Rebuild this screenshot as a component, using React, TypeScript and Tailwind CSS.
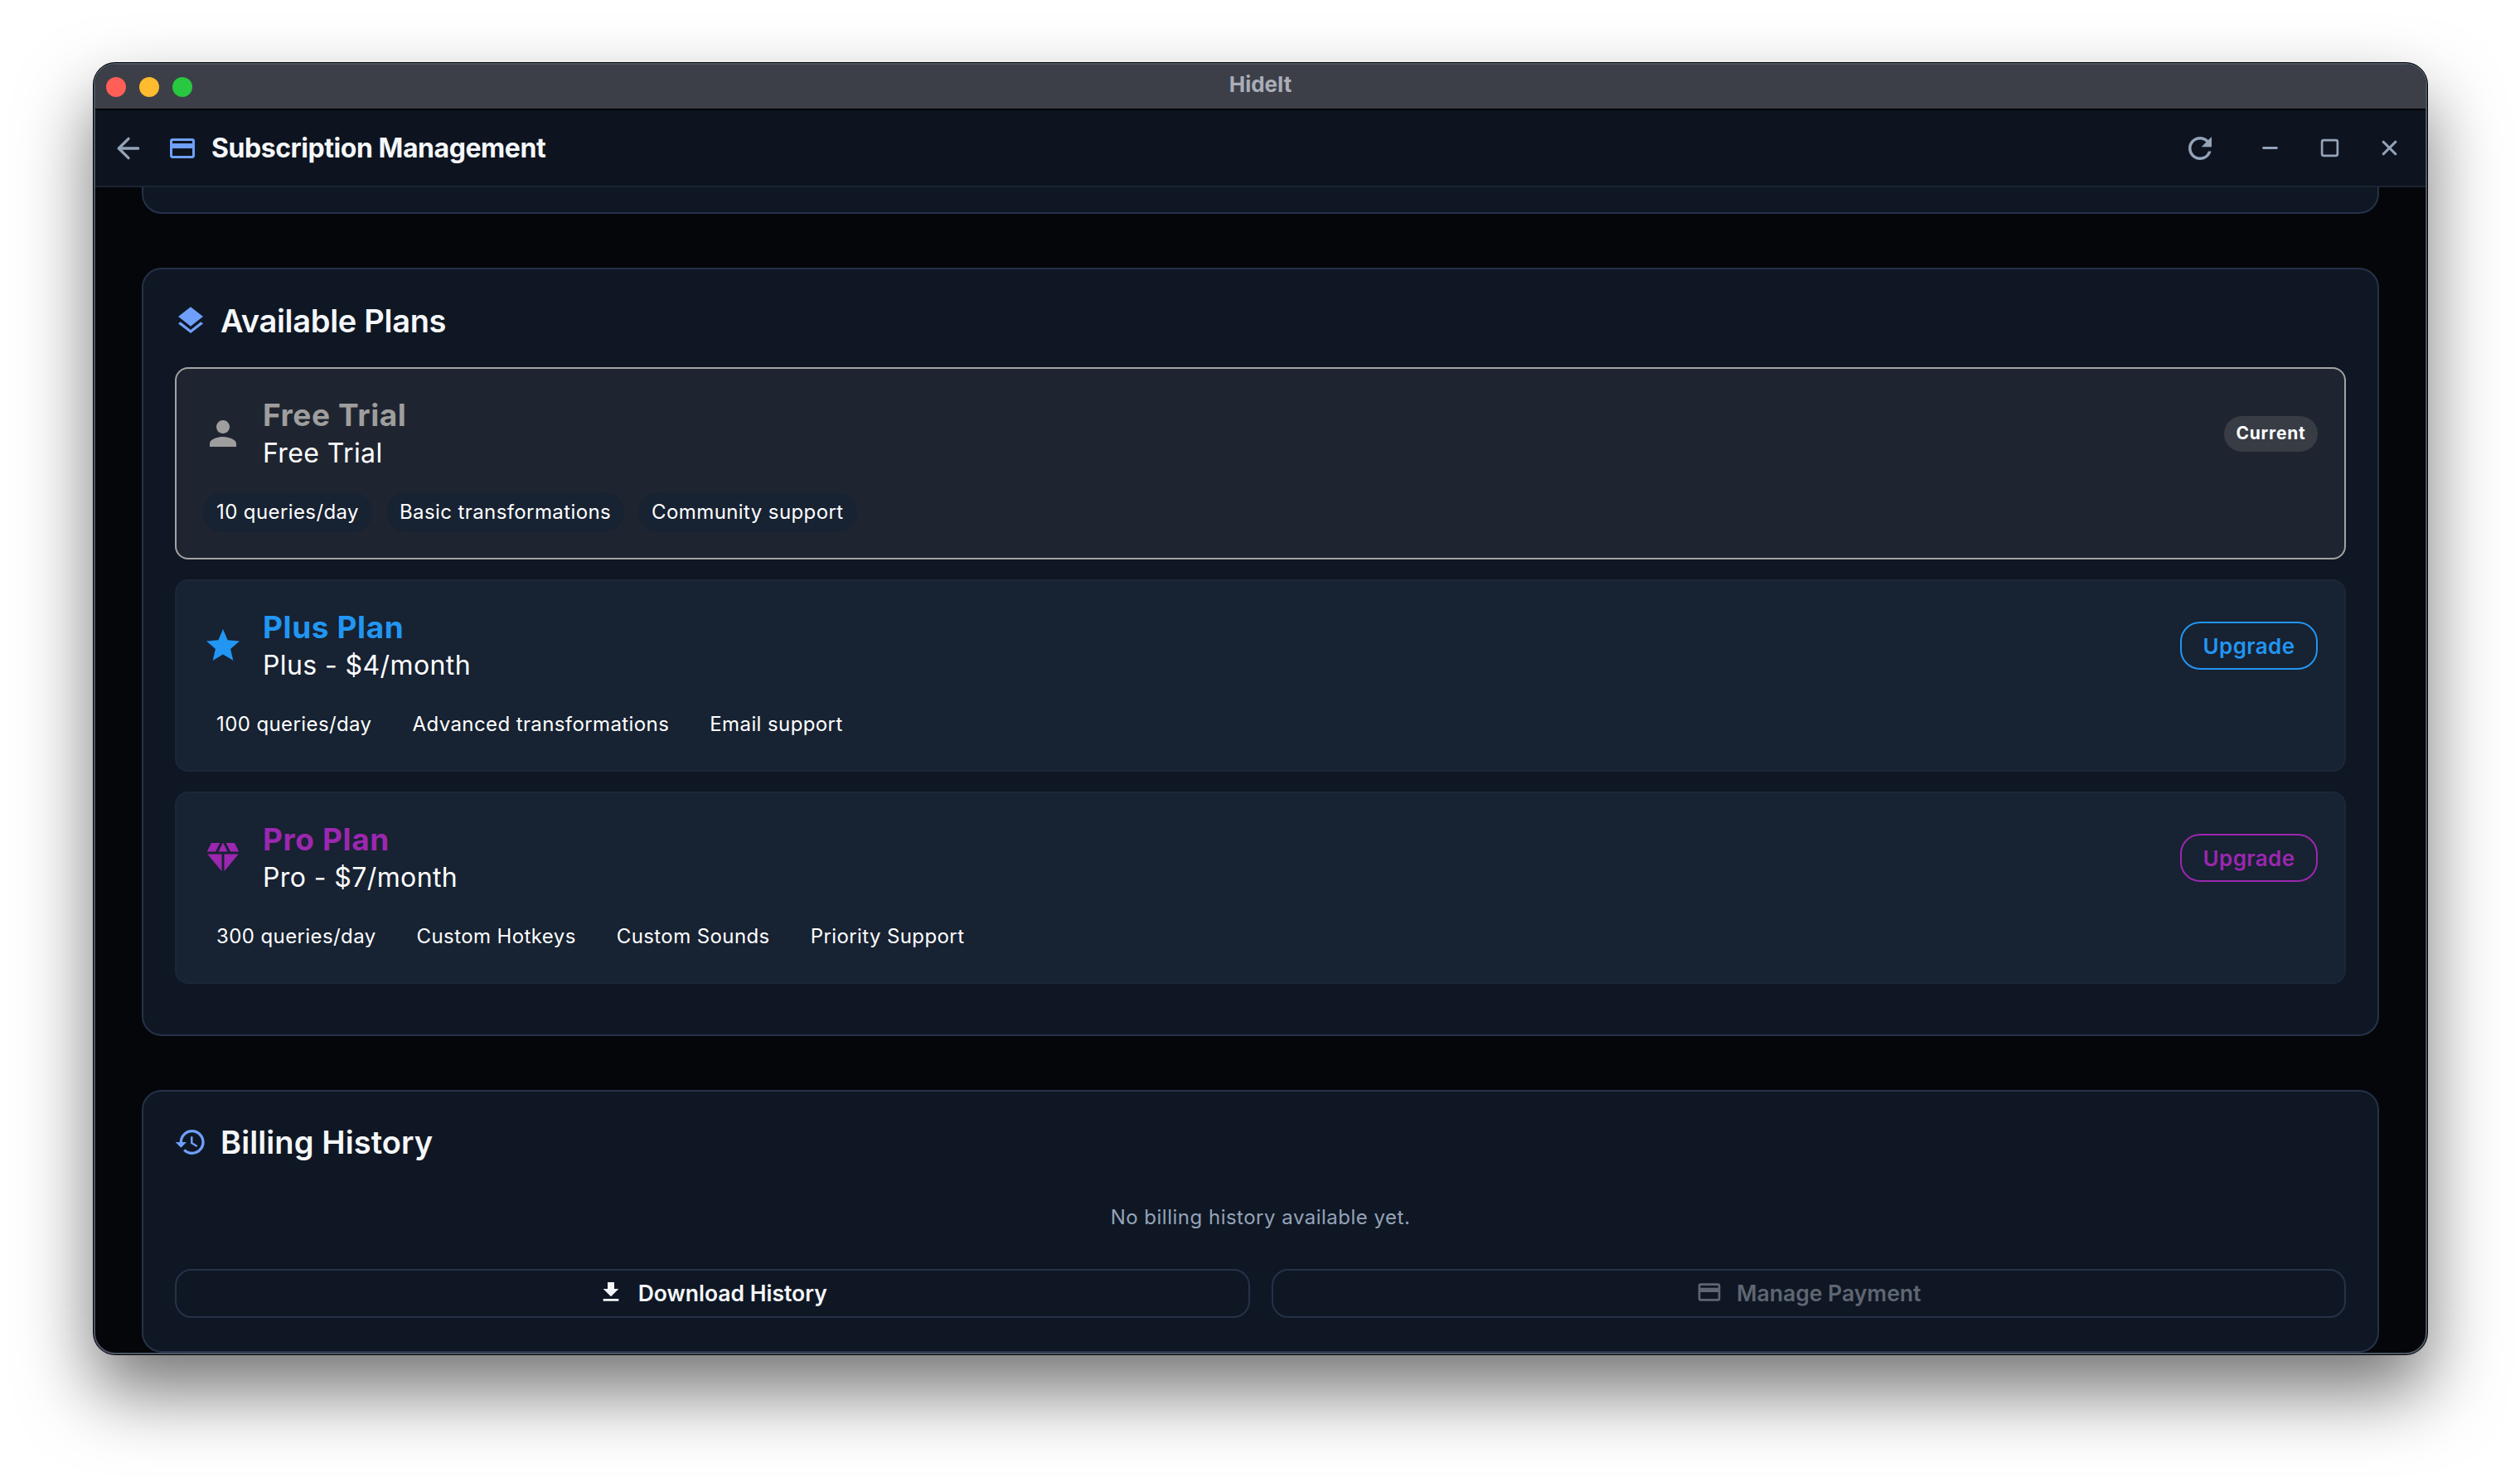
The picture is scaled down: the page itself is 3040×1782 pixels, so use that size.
import { ArrowLeft, Minus, Square, X } from "lucide-react";
import {
  MdCreditCard,
  MdDiamond,
  MdFileDownload,
  MdHistory,
  MdLayers,
  MdPerson,
  MdRefresh,
  MdStar,
} from "react-icons/md";
import type { ReactNode } from "react";

type Plan = {
  name: string;
  price: string;
  icon: ReactNode;
  titleClass: string;
  features: string[];
  current?: boolean;
  buttonClass?: string;
};

const plans: Plan[] = [
  {
    name: "Free Trial",
    price: "Free Trial",
    icon: <MdPerson size={48} className="text-[#9e9e9e]" />,
    titleClass: "text-[#9e9e9e]",
    features: ["10 queries/day", "Basic transformations", "Community support"],
    current: true,
  },
  {
    name: "Plus Plan",
    price: "Plus - $4/month",
    icon: <MdStar size={48} className="text-[#2196f3]" />,
    titleClass: "text-[#2196f3]",
    features: ["100 queries/day", "Advanced transformations", "Email support"],
    buttonClass: "border-[#2196f3] text-[#2196f3]",
  },
  {
    name: "Pro Plan",
    price: "Pro - $7/month",
    icon: <MdDiamond size={48} className="text-[#9c27b0]" />,
    titleClass: "text-[#9c27b0]",
    features: ["300 queries/day", "Custom Hotkeys", "Custom Sounds", "Priority Support"],
    buttonClass: "border-[#9c27b0] text-[#9c27b0]",
  },
];

function PlanCard({ plan }: { plan: Plan }) {
  return (
    <div
      className={
        plan.current
          ? "h-[232px] rounded-[16px] border-2 border-[#a3a3a3] bg-[#1f2530] pl-[32px] pr-[32px] pt-[34px]"
          : "h-[232px] rounded-[16px] border-2 border-[#1c2738] bg-[#172232] pl-[32px] pr-[32px] pt-[34px]"
      }
    >
      <div className="flex items-center justify-between">
        <div className="flex items-center gap-[24px]">
          <div className="-mt-[3px] flex h-[48px] w-[48px] items-center justify-center">{plan.icon}</div>
          <div>
            <div className={`text-[37px] leading-[44px] font-bold tracking-[0.6px] ${plan.titleClass}`}>{plan.name}</div>
            <div className="mt-[2px] text-[32px] leading-[44px] font-normal tracking-[0.4px] text-white">{plan.price}</div>
          </div>
        </div>
        {plan.current ? (
          <span className="-mt-[2px] flex h-[43px] w-[113px] items-center justify-center rounded-full bg-[#373c45] text-[21px] font-bold tracking-[0.8px] text-white">
            Current
          </span>
        ) : (
          <button
            className={`-mt-[2px] h-[58px] w-[166px] rounded-[24px] border-2 text-[26px] font-semibold tracking-[0.4px] ${plan.buttonClass}`}
          >
            Upgrade
          </button>
        )}
      </div>
      <div className="mt-[25px] flex gap-[17px]">
        {plan.features.map((feature) => (
          <span
            key={feature}
            className={
              plan.current
                ? "flex h-[48px] items-center rounded-full bg-[#172232] px-[16px] text-[24px] font-normal tracking-[0.4px] text-white"
                : "flex h-[48px] items-center rounded-full px-[16px] text-[24px] font-normal tracking-[0.4px] text-white"
            }
          >
            {feature}
          </span>
        ))}
      </div>
    </div>
  );
}

export default function App() {
  return (
    <div className="h-[1782px] w-[3040px] overflow-hidden bg-white pl-[113px] pt-[76px] [font-family:Inter,sans-serif]">
      <div className="flex h-[1558px] w-[2815px] flex-col overflow-hidden rounded-[26px] border-2 border-[#4b5565] bg-[#05060a] shadow-[0_0_0_1px_#000,0_44px_88px_rgba(0,0,0,0.55)]">
        {/* title bar */}
        <div className="relative flex h-[55px] shrink-0 items-center gap-[16px] border-b-2 border-black bg-[#3c3f47] pl-[13px]">
          <span className="h-[24px] w-[24px] rounded-full bg-[#ff5f57]" />
          <span className="h-[24px] w-[24px] rounded-full bg-[#febc2e]" />
          <span className="h-[24px] w-[24px] rounded-full bg-[#28c840]" />
          <span className="absolute left-0 right-0 -mt-[6px] text-center text-[26px] font-bold text-[#a9adb8]">HideIt</span>
        </div>

        {/* app bar */}
        <div className="flex h-[93px] shrink-0 items-center justify-between border-b-2 border-[#1a2333] bg-[#0d1420] pl-[20px] pr-[8px]">
          <div className="flex items-center">
            <ArrowLeft size={40} strokeWidth={2} className="text-[#94a3b8]" />
            <MdCreditCard size={36} className="ml-[27px] text-[#6f9ffb]" />
            <span className="ml-[17px] text-[32px] font-bold tracking-[-0.45px] text-[#f5f7fa]">Subscription Management</span>
          </div>
          <div className="flex items-center text-[#94a3b8]">
            <div className="mr-[12px] flex h-[72px] w-[72px] items-center justify-center">
              <MdRefresh size={42} />
            </div>
            <div className="flex h-[72px] w-[72px] items-center justify-center">
              <Minus size={27} strokeWidth={2.6} />
            </div>
            <div className="flex h-[72px] w-[72px] items-center justify-center">
              <Square size={25} strokeWidth={2.6} />
            </div>
            <div className="flex h-[72px] w-[72px] items-center justify-center">
              <X size={29} strokeWidth={2.6} />
            </div>
          </div>
        </div>

        {/* scrolled content */}
        <div className="flex flex-1 flex-col overflow-hidden px-[56px]">
          <div className="h-[32px] shrink-0 rounded-b-[24px] border-x-2 border-b-2 border-[#253248] bg-[#0f1724]" />

          <section className="mt-[65px] shrink-0 rounded-[24px] border-2 border-[#253248] bg-[#0f1724] px-[38px] pb-[61px] pt-[37px]">
            <div className="flex h-[50px] items-center gap-[16px]">
              <MdLayers size={40} className="-ml-[1px] text-[#6f9ffb]" />
              <h2 className="text-[38px] font-semibold tracking-[-0.3px] text-[#f5f7fa]">Available Plans</h2>
            </div>
            <div className="mt-[31px] flex flex-col gap-[24px]">
              {plans.map((plan) => (
                <PlanCard key={plan.name} plan={plan} />
              ))}
            </div>
          </section>

          <section className="mt-[65px] shrink-0 rounded-[24px] border-2 border-[#253248] bg-[#0f1724] px-[38px] pb-[40px] pt-[36px]">
            <div className="flex h-[50px] items-center gap-[16px]">
              <MdHistory size={40} className="-ml-[1px] text-[#6f9ffb]" />
              <h2 className="text-[38px] font-semibold tracking-[0.1px] text-[#f5f7fa]">Billing History</h2>
            </div>
            <p className="mt-[48px] text-center text-[24px] leading-[36px] tracking-[0.5px] text-[#94a3b8]">
              No billing history available yet.
            </p>
            <div className="mt-[44px] flex gap-[26px]">
              <button className="flex h-[59px] flex-1 items-center justify-center gap-[17px] rounded-[20px] border-2 border-[#253248] text-[26.5px] font-semibold text-[#f5f7fa]">
                <MdFileDownload size={32} className="-mt-[4px]" />
                Download History
              </button>
              <button className="flex h-[59px] flex-1 items-center justify-center gap-[17px] rounded-[20px] border-2 border-[#253248] text-[26.5px] font-semibold text-[#5f6672]">
                <MdCreditCard size={32} className="-mt-[4px]" />
                Manage Payment
              </button>
            </div>
          </section>
        </div>
      </div>
    </div>
  );
}
